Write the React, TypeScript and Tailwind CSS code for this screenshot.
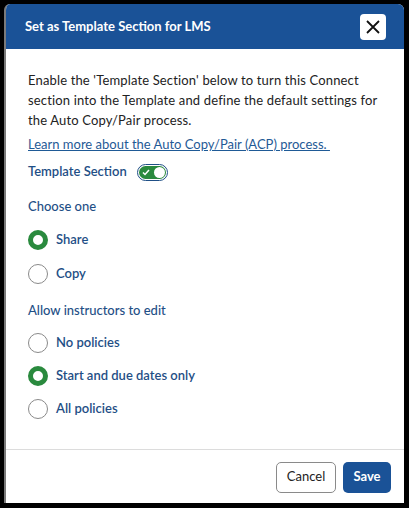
import React from "react";

function Radio({ checked, label }: { checked: boolean; label: string }) {
  return (
    <div className="flex items-center gap-[8px] h-[20px]">
      {checked ? (
        <span className="w-[20px] h-[20px] rounded-full border-[5px] border-[#2a8a3e] bg-white box-border" />
      ) : (
        <span className="w-[20px] h-[20px] rounded-full border border-[#8a8a8a] bg-white box-border" />
      )}
      <span className="text-[13px] font-semibold text-[#1f4f86]">{label}</span>
    </div>
  );
}

export default function App() {
  return (
    <div className="w-[409px] h-[508px] bg-black pt-[4px] pl-[4px] pr-[5px] pb-[5px]" style={{ fontFamily: "Lato, 'Open Sans', sans-serif" }}>
      <div className="w-full h-full bg-white rounded-t-[6px] border-l-2 border-[#7a7a7a] flex flex-col overflow-hidden">
        <div className="h-[45px] bg-[#1a5297] flex items-center justify-between pl-[19px] pr-[18px] shrink-0">
          <span className="text-white font-bold text-[13px]">Set as Template Section for LMS</span>
          <button className="w-[26px] h-[26px] bg-white rounded-[4px] flex items-center justify-center">
            <svg width="16" height="16" viewBox="0 0 16 16">
              <path d="M2 2 L14 14 M14 2 L2 14" stroke="#111" strokeWidth="1.8" fill="none" />
            </svg>
          </button>
        </div>
        <div className="flex-1 pl-[22px] pr-[16px] pt-[21px]">
          <p className="text-[13px] leading-[20px] text-[#222] tracking-[0.15px]">
            Enable the 'Template Section' below to turn this Connect section into the Template and define the default settings for the Auto Copy/Pair process.
          </p>
          <a className="block mt-[4px] text-[13px] leading-[20px] text-[#1f5a96] underline">Learn more about the Auto Copy/Pair (ACP) process.&nbsp;</a>
          <div className="flex items-center gap-[10px] mt-[8px] h-[20px]">
            <span className="text-[13px] font-semibold text-[#1f4f86]">Template Section</span>
            <span className="w-[31px] h-[17px] rounded-full border border-[#1f4f86] p-[1px] flex">
              <span className="flex-1 rounded-full bg-[#2a8a3e] flex items-center justify-between pl-[3px] pr-[1px]">
                <svg width="8" height="7" viewBox="0 0 8 7">
                  <path d="M1 3.5 L3 5.5 L7 1" stroke="white" strokeWidth="1.5" fill="none" />
                </svg>
                <span className="w-[11px] h-[11px] rounded-full bg-white" />
              </span>
            </span>
          </div>
          <div className="mt-[14px] text-[13px] font-medium text-[#1f4f86] leading-[20px]">Choose one</div>
          <div className="mt-[14px] flex flex-col gap-[14px]">
            <Radio checked label="Share" />
            <Radio checked={false} label="Copy" />
          </div>
          <div className="mt-[16px] text-[13px] font-medium text-[#1f4f86] leading-[20px]">Allow instructors to edit</div>
          <div className="mt-[13px] flex flex-col gap-[13px]">
            <Radio checked={false} label="No policies" />
            <Radio checked label="Start and due dates only" />
            <Radio checked={false} label="All policies" />
          </div>
        </div>
        <div className="border-t border-[#dcdcdc] h-[54px] shrink-0 flex items-center justify-end gap-[7px] pr-[13px] pt-[1px]">
          <button className="w-[60px] h-[31px] rounded-[5px] border border-[#8a8a8a] text-[13px] text-[#222] bg-white">Cancel</button>
          <button className="w-[48px] h-[31px] rounded-[5px] bg-[#1a5297] text-[13px] font-bold text-white">Save</button>
        </div>
      </div>
    </div>
  );
}
